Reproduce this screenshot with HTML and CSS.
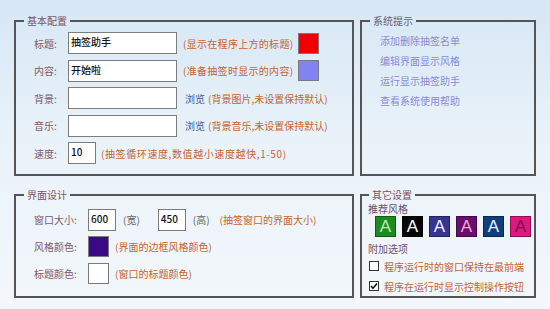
FILE: index.html
```html
<!DOCTYPE html>
<html lang="zh-CN">
<head>
    <meta charset="UTF-8">
    <title>抽签助手 - 设置</title>
    <link rel="stylesheet" href="styles.css">
</head>
<body>

<div class="settings">
    <!-- 基本配置 -->
    <fieldset class="group basic">
        <legend>基本配置</legend>
        <div class="row">
            <span class="label">标题:</span>
            <input class="field wide" type="text" value="抽签助手">
            <span class="hint fixed">(显示在程序上方的标题)</span>
            <span class="swatch red"></span>
        </div>
        <div class="row">
            <span class="label">内容:</span>
            <input class="field wide" type="text" value="开始啦">
            <span class="hint fixed">(准备抽签时显示的内容)</span>
            <span class="swatch lilac"></span>
        </div>
        <div class="row">
            <span class="label">背景:</span>
            <input class="field wide" type="text" value="">
            <a class="browse">浏览</a>
            <span class="hint">(背景图片,未设置保持默认)</span>
        </div>
        <div class="row">
            <span class="label">音乐:</span>
            <input class="field wide" type="text" value="">
            <a class="browse">浏览</a>
            <span class="hint">(背景音乐,未设置保持默认)</span>
        </div>
        <div class="row">
            <span class="label">速度:</span>
            <input class="field small" type="text" value="10">
            <span class="hint speed">(抽签循环速度,数值越小速度越快,1-50)</span>
        </div>
    </fieldset>

    <!-- 系统提示 -->
    <fieldset class="group tips">
        <legend>系统提示</legend>
        <a class="tip">添加删除抽签名单</a>
        <a class="tip">编辑界面显示风格</a>
        <a class="tip">运行显示抽签助手</a>
        <a class="tip">查看系统使用帮助</a>
    </fieldset>

    <!-- 界面设计 -->
    <fieldset class="group design">
        <legend>界面设计</legend>
        <div class="row">
            <span class="label long">窗口大小:</span>
            <input class="field small" type="text" value="600">
            <span class="unit">(宽)</span>
            <input class="field small" type="text" value="450">
            <span class="unit">(高)</span>
            <span class="hint">(抽签窗口的界面大小)</span>
        </div>
        <div class="row">
            <span class="label long">风格颜色:</span>
            <span class="swatch indigo"></span>
            <span class="hint">(界面的边框风格颜色)</span>
        </div>
        <div class="row">
            <span class="label long">标题颜色:</span>
            <span class="swatch white"></span>
            <span class="hint">(窗口的标题颜色)</span>
        </div>
    </fieldset>

    <!-- 其它设置 -->
    <fieldset class="group other">
        <legend>其它设置</legend>
        <div class="sub">推荐风格</div>
        <div class="themes">
            <span class="theme t-green">A</span>
            <span class="theme t-black">A</span>
            <span class="theme t-indigo">A</span>
            <span class="theme t-purple">A</span>
            <span class="theme t-navy">A</span>
            <span class="theme t-pink">A</span>
        </div>
        <div class="sub extra">附加选项</div>
        <div class="check">
            <span class="box"></span>
            <span class="hint">程序运行时的窗口保持在最前端</span>
        </div>
        <div class="check">
            <span class="box">
                <svg width="8" height="8" viewBox="0 0 8 8"><path d="M1 4 L3 6.2 L7 1.5" fill="none" stroke="#111" stroke-width="1.6"/></svg>
            </span>
            <span class="hint">程序在运行时显示控制操作按钮</span>
        </div>
    </fieldset>
</div>

</body>
</html>
```

FILE: styles.css
```css
/* 页面 */
body {
    margin: 0;
    width: 550px;
    height: 309px;
    overflow: hidden;
    font-family: "Noto Sans CJK SC", "Noto Sans", sans-serif;
    font-size: 10px;
    background: linear-gradient(180deg, #d6e7f5 0%, #e9f2f9 45%, #f3f7fb 100%);
}

/* 两列布局 */
.settings {
    display: grid;
    grid-template-columns: 340px 176px;
    grid-template-rows: 162px 110px;
    column-gap: 6px;
    row-gap: 12px;
    padding: 14px 0 0 14px;
}

/* 分组框 */
.group {
    box-sizing: border-box;
    margin: 0;
    padding: 0;
    border: 2px solid #555;
    min-width: 0;
}

.group legend {
    margin-left: -10px;
    padding: 0 3px;
    line-height: 14px;
    color: #7e5262;
}

.basic {
    padding: 4px 0 0 18px;
}

.design {
    padding: 7px 0 0 18px;
}

.tips {
    padding: 3px 0 0 18px;
}

.tips legend {
    color: #6a6072;
}

.other {
    padding: 0 0 0 4px;
}

.other legend {
    margin-left: 3px;
}

/* 行 */
.row {
    display: flex;
    align-items: center;
    height: 22px;
    margin-bottom: 5.5px;
}

.design .row {
    height: 21px;
    margin-bottom: 6px;
}

.label {
    width: 34px;
    color: #7e5a68;
    flex-shrink: 0;
}

.label.long {
    width: 54px;
}

.field {
    box-sizing: border-box;
    flex-shrink: 0;
    height: 22px;
    margin: 0;
    padding: 0 2px 3px;
    border: 1px solid #7c7c7c;
    background: #fff;
    font-family: inherit;
    font-size: 10px;
    font-weight: 500;
    color: #111;
    outline: none;
}

.field.wide {
    width: 109px;
    margin-right: 6px;
}

.field.small {
    width: 28px;
    margin-right: 5px;
}

.hint {
    color: #c5642e;
    white-space: nowrap;
}

.hint.fixed {
    width: 115px;
    flex-shrink: 0;
    letter-spacing: 0.3px;
}

.hint.speed {
    letter-spacing: 0.6px;
}

.browse {
    color: #3b5b98;
    margin-left: 2px;
    margin-right: 3px;
}

.unit {
    color: #666;
    margin-right: 18px;
    margin-left: 2px;
}

.unit + .hint {
    margin-left: -8px;
}

/* 颜色块 */
.swatch {
    box-sizing: border-box;
    width: 21px;
    height: 21px;
    border: 1px solid #7a7a7a;
    flex-shrink: 0;
}

.design .swatch {
    margin-right: 6px;
}

.red {
    background: #f00000;
}

.lilac {
    background: #8282f2;
}

.indigo {
    background: #3a0a86;
}

.white {
    background: #fff;
}

/* 系统提示 */
.tip {
    display: block;
    line-height: 20px;
    color: #8a8ad4;
}

/* 其它设置 */
.sub {
    line-height: 14px;
    color: #6e4f66;
    padding-left: 2px;
}

.sub.extra {
    margin-top: 5px;
}

.themes {
    display: flex;
    gap: 6px;
    padding-left: 9px;
}

.theme {
    box-sizing: border-box;
    flex: none;
    width: 21px;
    height: 21px;
    border: 1px solid rgba(0, 0, 0, 0.35);
    display: flex;
    align-items: center;
    justify-content: center;
    font-family: "Liberation Sans", Arial, sans-serif;
    font-size: 17px;
    line-height: 1;
}

.t-green { background: #1e8a22; color: #b4f2b0; }
.t-black { background: #050505; color: #fff; }
.t-indigo { background: #36358f; color: #f4f0ff; }
.t-purple { background: #6a0f6e; color: #f4a4dc; }
.t-navy { background: #113d7c; color: #e6f2ff; }
.t-pink { background: #e0177c; color: #7c1058; }

.check {
    display: flex;
    align-items: center;
    height: 20px;
    padding-left: 3px;
}

.box {
    box-sizing: border-box;
    flex: none;
    width: 10px;
    height: 10px;
    border: 1px solid #333;
    background: #fff;
    margin-right: 5px;
    display: flex;
    align-items: center;
    justify-content: center;
}
```
